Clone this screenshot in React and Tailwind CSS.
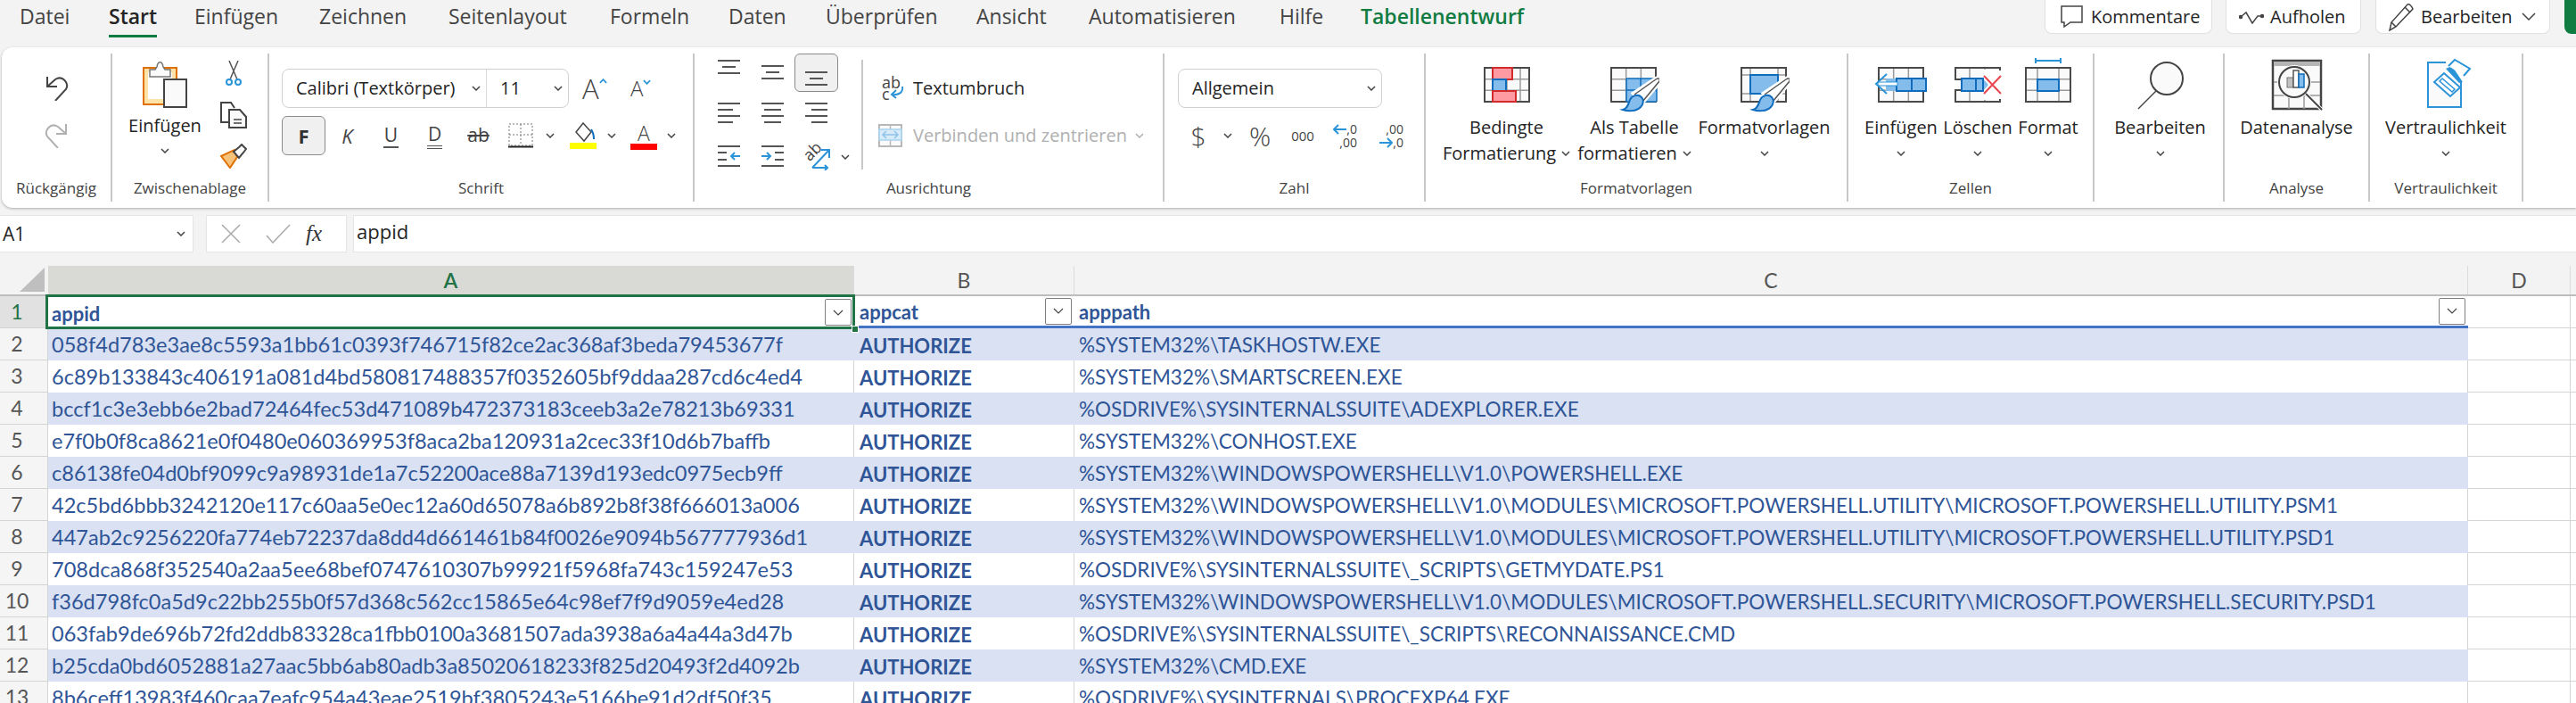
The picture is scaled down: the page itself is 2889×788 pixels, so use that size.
import React from 'react'

const rows = [
  ['058f4d783e3ae8c5593a1bb61c0393f746715f82ce2ac368af3beda79453677f', '%SYSTEM32%\\TASKHOSTW.EXE'],
  ['6c89b133843c406191a081d4bd580817488357f0352605bf9ddaa287cd6c4ed4', '%SYSTEM32%\\SMARTSCREEN.EXE'],
  ['bccf1c3e3ebb6e2bad72464fec53d471089b472373183ceeb3a2e78213b69331', '%OSDRIVE%\\SYSINTERNALSSUITE\\ADEXPLORER.EXE'],
  ['e7f0b0f8ca8621e0f0480e060369953f8aca2ba120931a2cec33f10d6b7baffb', '%SYSTEM32%\\CONHOST.EXE'],
  ['c86138fe04d0bf9099c9a98931de1a7c52200ace88a7139d193edc0975ecb9ff', '%SYSTEM32%\\WINDOWSPOWERSHELL\\V1.0\\POWERSHELL.EXE'],
  ['42c5bd6bbb3242120e117c60aa5e0ec12a60d65078a6b892b8f38f666013a006', '%SYSTEM32%\\WINDOWSPOWERSHELL\\V1.0\\MODULES\\MICROSOFT.POWERSHELL.UTILITY\\MICROSOFT.POWERSHELL.UTILITY.PSM1'],
  ['447ab2c9256220fa774eb72237da8dd4d661461b84f0026e9094b567777936d1', '%SYSTEM32%\\WINDOWSPOWERSHELL\\V1.0\\MODULES\\MICROSOFT.POWERSHELL.UTILITY\\MICROSOFT.POWERSHELL.UTILITY.PSD1'],
  ['708dca868f352540a2aa5ee68bef0747610307b99921f5968fa743c159247e53', '%OSDRIVE%\\SYSINTERNALSSUITE\\_SCRIPTS\\GETMYDATE.PS1'],
  ['f36d798fc0a5d9c22bb255b0f57d368c562cc15865e64c98ef7f9d9059e4ed28', '%SYSTEM32%\\WINDOWSPOWERSHELL\\V1.0\\MODULES\\MICROSOFT.POWERSHELL.SECURITY\\MICROSOFT.POWERSHELL.SECURITY.PSD1'],
  ['063fab9de696b72fd2ddb83328ca1fbb0100a3681507ada3938a6a4a44a3d47b', '%OSDRIVE%\\SYSINTERNALSSUITE\\_SCRIPTS\\RECONNAISSANCE.CMD'],
  ['b25cda0bd6052881a27aac5bb6ab80adb3a85020618233f825d20493f2d4092b', '%SYSTEM32%\\CMD.EXE'],
  ['8b6ceff13983f460caa7eafc954a43eae2519bf3805243e5166be91d2df50f35', '%OSDRIVE%\\SYSINTERNALS\\PROCEXP64.EXE'],
]

const tabs = [
  ['Datei', 'w-[100px]'],
  ['Start', 'w-[96px]'],
  ['Einfügen', 'w-[140px]'],
  ['Zeichnen', 'w-[145px]'],
  ['Seitenlayout', 'w-[181px]'],
  ['Formeln', 'w-[133px]'],
  ['Daten', 'w-[109px]'],
  ['Überprüfen', 'w-[169px]'],
  ['Ansicht', 'w-[126px]'],
  ['Automatisieren', 'w-[214px]'],
  ['Hilfe', 'w-[91px]'],
  ['Tabellenentwurf', 'w-[190px]'],
]

function Chevron({ className = '' }) {
  return (
    <svg className={`w-[10px] h-[6px] shrink-0 ${className}`} viewBox="0 0 10 6" fill="none" stroke="#444" strokeWidth="1.5">
      <path d="M1 1l4 4 4-4" />
    </svg>
  )
}

// table drawing shared by the big ribbon icons, cols and rows are inner line positions
function GridBase({ x = 1, y = 16, w = 50, h = 38, cols, lines }) {
  const xs = cols || [x + w / 3, x + (2 * w) / 3]
  const ys = lines || [y + h / 3, y + (2 * h) / 3]
  return (
    <g>
      <rect x={x} y={y} width={w} height={h} fill="#fafafa" />
      {xs.map((c) => (
        <path key={c} d={`M${c} ${y}v${h}`} stroke="#999" strokeWidth="1.5" />
      ))}
      {ys.map((r) => (
        <path key={r} d={`M${x} ${r}h${w}`} stroke="#999" strokeWidth="1.5" />
      ))}
      <rect x={x} y={y} width={w} height={h} stroke="#4a4a4a" strokeWidth="2" />
    </g>
  )
}

function Brush() {
  return (
    <g>
      <path d="M26 45L50 29c3-2 5-1 4 2L34 55z" fill="#fff" stroke="#fff" strokeWidth="6" />
      <path d="M26 46L50 29c3-2 5-1 4 2L35 54" fill="#fff" stroke="#555" strokeWidth="1.5" />
      <path d="M13 63c5-1 6-6 8-11 2-5 9-7 13-3 3 3 2 8-1 11-5 5-14 5-20 3z" fill="#84bdec" stroke="#0f6cbd" strokeWidth="2" />
    </g>
  )
}

function CondIcon() {
  return (
    <svg className="w-[52px] h-[68px]" viewBox="0 0 52 68" fill="none">
      <GridBase cols={[10, 26, 41]} />
      <rect x="10" y="16" width="22" height="13" fill="#ff9aa2" stroke="#d22b2b" strokeWidth="2" />
      <rect x="10" y="29" width="15" height="13" fill="#84bdec" stroke="#0f6cbd" strokeWidth="2" />
      <rect x="10" y="42" width="26" height="12" fill="#ff9aa2" stroke="#d22b2b" strokeWidth="2" />
    </svg>
  )
}

function TableIcon() {
  return (
    <svg className="w-[56px] h-[68px]" viewBox="-2 0 56 68" fill="none">
      <GridBase x={0} />
      <rect x="17" y="28" width="34" height="26" fill="#84bdec" />
      <path d="M17 28v26h34M17 28h34v26M33 28v26M17 41h34" stroke="#0f6cbd" strokeWidth="1.5" />
      <Brush />
    </svg>
  )
}

function StyleIcon() {
  return (
    <svg className="w-[56px] h-[68px]" viewBox="-2 0 56 68" fill="none">
      <GridBase x={0} cols={[10, 41]} lines={[24, 45]} />
      <rect x="10" y="24" width="31" height="21" fill="#84bdec" stroke="#0f6cbd" strokeWidth="2" />
      <Brush />
    </svg>
  )
}

function InsertIcon() {
  return (
    <svg className="w-[60px] h-[68px]" viewBox="0 0 60 68" fill="none">
      <GridBase x={5} />
      <rect x="13" y="28" width="13" height="14" fill="#84bdec" />
      <rect x="25" y="28" width="33" height="14" fill="#84bdec" stroke="#0f6cbd" strokeWidth="2" />
      <path d="M42 28v14" stroke="#0f6cbd" strokeWidth="2" />
      <path d="M4 32h22v4H4z" fill="#fff" stroke="#2b94d8" strokeWidth="1" />
      <path d="M14 23L2 34l12 11" stroke="#2b94d8" strokeWidth="2" />
    </svg>
  )
}

function DeleteIcon() {
  return (
    <svg className="w-[56px] h-[68px]" viewBox="0 0 56 68" fill="none">
      <GridBase x={3} cols={[19, 36]} />
      <rect x="1" y="30" width="7" height="10" fill="#fff" />
      <path d="M3 29v1M3 41v-1M3 41h7M3 29h7" stroke="#4a4a4a" strokeWidth="2" />
      <rect x="35" y="18" width="20" height="34" fill="#fff" />
      <path d="M39 55v-1M53 16v3M53 51v3" stroke="#4a4a4a" strokeWidth="2" />
      <path d="M10 28h24l6 7-6 7H10z" fill="#84bdec" />
      <path d="M26 28H10v14h24V28h-8v14" stroke="#0f6cbd" strokeWidth="2" />
      <path d="M35 25l19 20M54 25L35 45" stroke="#e8474f" strokeWidth="2" />
    </svg>
  )
}

function FormatIcon() {
  return (
    <svg className="w-[52px] h-[68px]" viewBox="0 0 52 68" fill="none">
      <path d="M12 8h28M12 5v6M40 5v6" stroke="#2b94d8" strokeWidth="2" />
      <GridBase cols={[14, 38]} />
      <rect x="14" y="29" width="24" height="13" fill="#84bdec" stroke="#0f6cbd" strokeWidth="2" />
    </svg>
  )
}

function SearchIcon() {
  return (
    <svg className="w-[54px] h-[68px]" viewBox="0 0 54 68" fill="none" stroke="#444">
      <circle cx="34" cy="28" r="18" fill="#fafafa" strokeWidth="2" />
      <path d="M22 42L2 62" strokeWidth="1.5" />
    </svg>
  )
}

function AnalysisIcon() {
  return (
    <svg className="w-[58px] h-[68px]" viewBox="0 0 58 68" fill="none">
      <rect x="2" y="8" width="54" height="54" fill="#fafafa" stroke="#444" strokeWidth="2.5" />
      <rect x="3" y="9" width="52" height="5" fill="#b5b5b5" />
      <path d="M3 32h52M3 47h52M20 47v15M37 47v15" stroke="#999" strokeWidth="1.5" />
      <circle cx="26" cy="32" r="19" fill="#fafafa" />
      <path d="M39 45l18 18" stroke="#fff" strokeWidth="4" />
      <path d="M39 45l18 18" stroke="#444" strokeWidth="2" />
      <circle cx="26" cy="32" r="17" stroke="#444" strokeWidth="2" />
      <rect x="18" y="27" width="7" height="11" fill="#c0c0c0" stroke="#777" />
      <rect x="25" y="19" width="6" height="19" fill="#fff" stroke="#555" strokeWidth="1.5" />
      <rect x="31" y="23" width="6" height="15" fill="#84bdec" stroke="#0f6cbd" strokeWidth="1.5" />
    </svg>
  )
}

function SensitivityIcon() {
  return (
    <svg className="w-[60px] h-[68px]" viewBox="0 0 60 68" fill="none">
      <path d="M30 10H10v50h37V31" fill="#fafafa" stroke="#2b94d8" strokeWidth="2" />
      <path d="M17 32l11-10 18 16-11 10z" fill="#fff" stroke="#2b94d8" strokeWidth="2" />
      <path d="M23 31l3-3 14 12-3 3z" stroke="#2b94d8" strokeWidth="1.5" />
      <path d="M30 17l7-3 12 18-4 1z" fill="#2b94d8" />
      <path d="M33 14l7-7 17 10-7 8" fill="#fff" stroke="#2b94d8" strokeWidth="2" />
    </svg>
  )
}

function AlignLines({ lines }) {
  // each line: [x, y, len]
  return (
    <svg className="w-[26px] h-[24px]" viewBox="0 0 26 24" fill="none" stroke="#555" strokeWidth="2">
      {lines.map(([x, y, len], i) => (
        <path key={i} d={`M${x} ${y}h${len}`} />
      ))}
    </svg>
  )
}

function Group({ width, label, body, children }) {
  return (
    <div className={`${width} h-[166px] flex flex-col border-r-2 border-[#c8c8c8] shrink-0`}>
      <div className={`h-[136px] ${body}`}>{children}</div>
      <div className="h-[30px] text-center text-[17px] leading-[30px] text-[#444]">{label}</div>
    </div>
  )
}

function BigButton({ width, icon, lines, chevron }) {
  return (
    <div className={`${width} flex flex-col items-center shrink-0`}>
      {icon}
      {lines.map((line, i) => (
        <div key={i} className="h-[29px] leading-[29px] whitespace-nowrap text-[20px] flex items-center gap-[6px]">
          {line}
          {chevron === 'inline' && i === 1 && <Chevron />}
        </div>
      ))}
      {chevron === 'below' && (
        <div className="h-[29px] flex items-center">
          <Chevron />
        </div>
      )}
    </div>
  )
}

const alignTop = [[0, 1, 25], [5, 8, 15], [0, 15, 25]]

function Ribbon() {
  return (
    <div className="h-[180px] ml-[2px] py-[7px] bg-white rounded-l-xl shadow-[0_1px_3px_rgba(0,0,0,0.3)] flex text-[#242424]">
      <Group width="w-[124px]" label="Rückgängig" body="flex flex-col items-center pt-[25px] gap-[25px]">
        <svg className="w-[27px] h-[28px]" viewBox="0 0 27 28" fill="none" stroke="#444" strokeWidth="2">
          <path d="M3 1v11h11M3 12l9-8c8-5 16 4 12 11L12 28" />
        </svg>
        <svg className="w-[27px] h-[28px]" viewBox="0 0 27 28" fill="none" stroke="#b0b0b0" strokeWidth="2">
          <path d="M24 1v11H13M24 12l-9-8C7-1-1 8 3 15l12 13" />
        </svg>
      </Group>

      <Group width="w-[176px]" label="Zwischenablage" body="flex pl-[18px]">
        <div className="w-[82px] flex flex-col items-center pt-[7px]">
          <svg className="w-[50px] h-[54px]" viewBox="0 0 50 54" fill="none">
            <rect x="1" y="9" width="37" height="41" fill="#fde3a7" stroke="#e07000" strokeWidth="2" />
            <rect x="6" y="14" width="27" height="30" fill="#fff" />
            <path d="M8 11h6l2-3c1-7 6-7 7 0l2 3h6v8H8z" fill="#fafafa" stroke="#777" strokeWidth="1.5" />
            <rect x="24" y="22" width="25" height="31" fill="#fafafa" stroke="#444" strokeWidth="2" />
          </svg>
          <div className="mt-[5px] h-[29px] leading-[29px] text-[20px]">Einfügen</div>
          <Chevron className="mt-[11px]" />
        </div>
        <div className="w-[30px] ml-[21px] flex flex-col items-center pt-[8px]">
          <svg className="w-[20px] h-[28px]" viewBox="0 0 20 28" fill="none">
            <path d="M5 0l9 21M15 0L6 21" stroke="#555" strokeWidth="1.5" />
            <circle cx="5" cy="24" r="3" stroke="#2b94d8" strokeWidth="2" />
            <circle cx="15" cy="24" r="3" stroke="#2b94d8" strokeWidth="2" />
          </svg>
          <svg className="w-[30px] h-[30px] mt-[18px]" viewBox="0 0 30 30" fill="none" stroke="#444" strokeWidth="2">
            <path d="M9 23H1V1h11l4 6" />
            <path d="M10 9h12l7 8v12H10z" fill="#fafafa" />
            <path d="M15 20h9M15 24h9" strokeWidth="1.5" />
          </svg>
          <svg className="w-[30px] h-[28px] mt-[17px]" viewBox="0 0 30 28" fill="none">
            <path d="M1 14l15-7 3 8-8 12z" fill="#f6c27a" stroke="#e07000" strokeWidth="2" />
            <path d="M15 9l6-5 3-3 5 5-3 4-5 6z" fill="#fafafa" stroke="#444" strokeWidth="2" />
          </svg>
        </div>
      </Group>

      <Group width="w-[477px]" label="Schrift" body="pl-[14px] pt-[17px]">
        <div className="flex items-center h-[44px]">
          <div className="w-[322px] h-[44px] flex items-center border border-[#d0d0d0] rounded-lg">
            <div className="w-[229px] pl-[15px] pr-[6px] flex items-center justify-between border-r border-[#d8d8d8] h-full text-[20px] whitespace-nowrap">
              <span>Calibri (Textkörper)</span>
              <Chevron />
            </div>
            <div className="flex-1 pl-[15px] pr-[6px] flex items-center justify-between text-[20px]">
              <span>11</span>
              <Chevron />
            </div>
          </div>
          <div className="ml-[15px] w-[30px] flex items-start text-[#444]">
            <span className="text-[31px] font-light leading-[44px]">A</span>
            <svg className="w-[9px] h-[6px] mt-[11px] shrink-0" viewBox="0 0 10 6" fill="none" stroke="#2b94d8" strokeWidth="2">
              <path d="M1 5l4-4 4 4" />
            </svg>
          </div>
          <div className="ml-[24px] w-[26px] flex items-start text-[#444]">
            <span className="text-[24px] font-light leading-[44px]">A</span>
            <svg className="w-[9px] h-[6px] mt-[12px] shrink-0" viewBox="0 0 10 6" fill="none" stroke="#2b94d8" strokeWidth="2">
              <path d="M1 1l4 4 4-4" />
            </svg>
          </div>
        </div>
        <div className="flex items-center h-[44px] mt-[9px] text-[#444]">
          <div className="w-[49px] h-[44px] flex items-center justify-center rounded-md border border-[#8a8a8a] bg-[#f0f0f0] text-[22px] font-bold text-[#333]">F</div>
          <div className="w-[49px] ml-0 text-center text-[22px] italic">K</div>
          <div className="w-[49px] flex justify-center"><span className="text-[21px] leading-[25px] border-b-2 border-[#555] px-[1px]">U</span></div>
          <div className="w-[49px] flex justify-center"><span className="text-[21px] leading-[25px] border-b-4 border-double border-[#555] px-[1px]">D</span></div>
          <div className="w-[49px] text-center text-[21px] line-through">ab</div>
          <svg className="w-[28px] h-[28px] ml-[9px]" viewBox="0 0 28 28" fill="none" stroke="#777" strokeWidth="1" strokeDasharray="2 2">
            <path d="M1 1h26v24H1zM14 1v24M1 13h26" />
            <path d="M0 26.5h28" stroke="#222" strokeWidth="2" strokeDasharray="none" />
          </svg>
          <Chevron className="ml-[14px]" />
          <svg className="w-[30px] h-[30px] ml-[17px]" viewBox="0 0 30 30" fill="none">
            <path d="M15 1l9 10-8 10-9-10z" stroke="#444" strokeWidth="1.5" />
            <path d="M24 8c2 3 3 5 3 11" stroke="#0f6cbd" strokeWidth="2" />
            <rect x="0" y="23" width="30" height="7" fill="#ffff00" />
          </svg>
          <Chevron className="ml-[12px]" />
          <div className="ml-[16px] w-[30px] flex flex-col items-center">
            <span className="text-[23px] font-light leading-[24px] h-[24px]">A</span>
            <div className="w-[30px] h-[7px] bg-[#ff0000]" />
          </div>
          <Chevron className="ml-[11px]" />
        </div>
      </Group>

      <Group width="w-[527px]" label="Ausrichtung" body="flex pl-[15px]">
        <div className="w-[146px] grid grid-cols-3 grid-rows-[43px_48px_48px]">
          <div className="flex items-start justify-center pt-[7px]"><AlignLines lines={alignTop} /></div>
          <div className="flex items-start justify-center pt-[13px]"><AlignLines lines={alignTop} /></div>
          <div className="flex items-start justify-center pt-[19px] rounded-md border border-[#8a8a8a] bg-[#f0f0f0]"><AlignLines lines={alignTop} /></div>
          <div className="flex items-center justify-center"><AlignLines lines={[[0, 1, 25], [0, 8, 17], [0, 15, 25], [0, 22, 17]]} /></div>
          <div className="flex items-center justify-center"><AlignLines lines={[[0, 1, 25], [3, 8, 19], [0, 15, 25], [3, 22, 19]]} /></div>
          <div className="flex items-center justify-center"><AlignLines lines={[[0, 1, 25], [7, 8, 18], [0, 15, 25], [7, 22, 18]]} /></div>
          <div className="flex items-center justify-center">
            <svg className="w-[26px] h-[26px]" viewBox="0 0 26 26" fill="none" stroke="#555" strokeWidth="2">
              <path d="M0 2h25M0 9h10M0 17h10M0 24h25" />
              <path d="M25 13H15M19 9l-4 4 4 4" stroke="#2b94d8" />
            </svg>
          </div>
          <div className="flex items-center justify-center">
            <svg className="w-[26px] h-[26px]" viewBox="0 0 26 26" fill="none" stroke="#555" strokeWidth="2">
              <path d="M0 2h25M15 9h10M15 17h10M0 24h25" />
              <path d="M0 13h10M6 9l4 4-4 4" stroke="#2b94d8" />
            </svg>
          </div>
          <div className="flex items-center justify-center">
            <div className="relative w-[32px] h-[32px]">
              <span className="absolute left-[0px] top-[-1px] -rotate-45 text-[18px] leading-[22px] text-[#444]">ab</span>
              <svg className="absolute left-0 top-0 w-[32px] h-[32px]" viewBox="0 0 32 32" fill="none" stroke="#2b94d8" strokeWidth="2">
                <path d="M11 29L30 9M21 9h9v9M11 29h17M25 26l3 3-3 3" />
              </svg>
            </div>
          </div>
        </div>
        <Chevron className="mt-[113px] ml-[3px]" />
        <div className="w-[2px] h-[123px] mt-[7px] ml-[13px] bg-[#c8c8c8]" />
        <div className="ml-[16px] pt-[17px]">
          <div className="flex items-center h-[44px] text-[20px]">
            <div className="relative w-[26px] h-[26px] ml-[5px] text-[18px] leading-[13px] text-[#444]">
              ab<br />c
              <svg className="absolute left-0 top-0 w-[26px] h-[26px]" viewBox="0 0 26 26" fill="none" stroke="#2b94d8" strokeWidth="2">
                <path d="M23 11c1 6-3 10-12 9M16 15l-5 5 5 4" />
              </svg>
            </div>
            <span className="ml-[9px]">Textumbruch</span>
          </div>
          <div className="flex items-center h-[44px] mt-[9px] text-[20px] text-[#b0b0b0] whitespace-nowrap">
            <svg className="w-[27px] h-[26px] ml-[1px]" viewBox="0 0 27 26" fill="none">
              <rect x="1" y="1" width="25" height="24" fill="#fafafa" stroke="#b8b8b8" strokeWidth="2" />
              <path d="M13.5 1v24" stroke="#b8b8b8" strokeWidth="1.5" />
              <rect x="1" y="6" width="25" height="12" fill="#d7ebf9" stroke="#a9d4f0" strokeWidth="1.5" />
              <path d="M5 12h17M9 8l-4 4 4 4M18 8l4 4-4 4" stroke="#8fc4ea" strokeWidth="1.5" />
            </svg>
            <span className="ml-[12px]">Verbinden und zentrieren</span>
            <svg className="w-[10px] h-[6px] ml-[9px]" viewBox="0 0 10 6" fill="none" stroke="#b0b0b0" strokeWidth="1.5">
              <path d="M1 1l4 4 4-4" />
            </svg>
          </div>
        </div>
      </Group>

      <Group width="w-[293px]" label="Zahl" body="pl-[15px] pt-[17px]">
        <div className="w-[229px] h-[44px] pl-[15px] pr-[6px] flex items-center justify-between border border-[#d0d0d0] rounded-lg text-[20px]">
          <span>Allgemein</span>
          <Chevron />
        </div>
        <div className="flex items-center h-[44px] mt-[9px] text-[#444]">
          <span className="w-[46px] text-center text-[30px] font-light">$</span>
          <Chevron className="ml-[5px]" />
          <span className="w-[40px] ml-[11px] text-center text-[30px] font-light">%</span>
          <span className="w-[46px] ml-[5px] text-center text-[15px]">000</span>
          <div className="w-[30px] ml-[8px] flex flex-col text-[14px] leading-[15px]">
            <div className="flex items-center justify-end">
              <svg className="w-[15px] h-[12px]" viewBox="0 0 15 12" fill="none" stroke="#2b94d8" strokeWidth="2">
                <path d="M15 6H1M6 1L1 6l5 5" />
              </svg>
              <span>,0</span>
            </div>
            <div className="text-right">,00</div>
          </div>
          <div className="w-[30px] ml-[22px] flex flex-col text-[14px] leading-[15px]">
            <div className="text-right">,00</div>
            <div className="flex items-center justify-end">
              <svg className="w-[15px] h-[12px]" viewBox="0 0 15 12" fill="none" stroke="#2b94d8" strokeWidth="2">
                <path d="M0 6h14M9 1l5 5-5 5" />
              </svg>
              <span>,0</span>
            </div>
          </div>
        </div>
      </Group>

      <Group width="w-[474px]" label="Formatvorlagen" body="flex pl-[11px]">
        <BigButton width="w-[159px]" icon={<CondIcon />} lines={['Bedingte', 'Formatierung']} chevron="inline" />
        <BigButton width="w-[128px]" icon={<TableIcon />} lines={['Als Tabelle', 'formatieren']} chevron="inline" />
        <BigButton width="w-[149px] ml-[7px]" icon={<StyleIcon />} lines={['Formatvorlagen']} chevron="below" />
      </Group>

      <Group width="w-[276px]" label="Zellen" body="flex pl-[18px]">
        <BigButton width="w-[82px]" icon={<InsertIcon />} lines={['Einfügen']} chevron="below" />
        <BigButton width="w-[76px] ml-[7px]" icon={<DeleteIcon />} lines={['Löschen']} chevron="below" />
        <BigButton width="w-[66px] ml-[8px]" icon={<FormatIcon />} lines={['Format']} chevron="below" />
      </Group>

      <Group width="w-[146px]" label="" body="flex justify-center pl-[3px]">
        <BigButton width="w-[110px]" icon={<SearchIcon />} lines={['Bearbeiten']} chevron="below" />
      </Group>

      <Group width="w-[163px]" label="Analyse" body="flex justify-center">
        <BigButton width="w-[130px]" icon={<AnalysisIcon />} lines={['Datenanalyse']} />
      </Group>

      <Group width="w-[172px]" label="Vertraulichkeit" body="flex justify-center">
        <BigButton width="w-[140px]" icon={<SensitivityIcon />} lines={['Vertraulichkeit']} chevron="below" />
      </Group>
    </div>
  )
}

function TabBar() {
  return (
    <div className="h-[53px] flex pl-[22px] text-[#444]">
      <div className="flex">
        {tabs.map(([label, width]) => (
          <div key={label} className={`${width} shrink-0 h-[42px] text-[23px] leading-[36px] whitespace-nowrap`}>
            {label === 'Start' ? (
              <span className="inline-block h-[42px] border-b-[3px] border-[#107c41] font-semibold text-[#242424]">{label}</span>
            ) : label === 'Tabellenentwurf' ? (
              <span className="font-semibold text-[#107c41]">{label}</span>
            ) : (
              label
            )}
          </div>
        ))}
      </div>
      <div className="ml-[577px] flex items-start text-[#242424] text-[20px]">
        <div className="w-[188px] h-[38px] flex items-center pl-[17px] gap-[9px] bg-white border border-t-0 border-[#e0e0e0] rounded-b-lg">
          <svg className="w-[25px] h-[25px]" viewBox="0 0 25 25" fill="none" stroke="#444" strokeWidth="1.5">
            <path d="M1 1h23v18H11l-7 5v-5H1z" />
          </svg>
          Kommentare
        </div>
        <div className="w-[152px] h-[38px] ml-[15px] flex items-center pl-[14px] gap-[7px] bg-white border border-t-0 border-[#e0e0e0] rounded-b-lg">
          <svg className="w-[28px] h-[16px]" viewBox="0 0 28 16" fill="none" stroke="#444" strokeWidth="1.5">
            <path d="M2 8l6-5 7 12 6-8h5" />
            <circle cx="2" cy="8" r="1.5" fill="#444" />
            <circle cx="26" cy="7" r="1.5" fill="#444" />
          </svg>
          Aufholen
        </div>
        <div className="w-[196px] h-[38px] ml-[16px] flex items-center pl-[14px] gap-[8px] bg-white border border-t-0 border-[#e0e0e0] rounded-b-lg">
          <svg className="w-[28px] h-[32px]" viewBox="0 0 28 32" fill="none" stroke="#444" strokeWidth="1.5">
            <path d="M1 31l2-9L21 2c2-1 5 2 6 5L8 27z" />
            <path d="M3 22l5 5M18 5l6 6" />
          </svg>
          Bearbeiten
          <svg className="w-[16px] h-[9px] ml-[2px]" viewBox="0 0 16 9" fill="none" stroke="#444" strokeWidth="1.5">
            <path d="M1 1l7 7 7-7" />
          </svg>
        </div>
        <div className="w-[13px] h-[38px] ml-[16px] bg-[#107c41] rounded-bl-lg" />
      </div>
    </div>
  )
}

function FormulaBar() {
  return (
    <div className="h-[42px] mt-[8px] flex text-[#242424]">
      <div className="w-[217px] flex items-center justify-between pl-[3px] pr-[8px] bg-white border border-l-0 border-[#e5e5e5] text-[21px]">
        <span className="pt-[2px]">A1</span>
        <Chevron />
      </div>
      <div className="w-[158px] ml-[14px] flex items-center bg-white border border-[#e5e5e5]">
        <svg className="w-[22px] h-[22px] ml-[16px]" viewBox="0 0 22 22" fill="none" stroke="#aaa" strokeWidth="1.5">
          <path d="M1 1l20 20M21 1L1 21" />
        </svg>
        <svg className="w-[28px] h-[22px] ml-[28px]" viewBox="0 0 28 22" fill="none" stroke="#aaa" strokeWidth="1.5">
          <path d="M1 13l7 8L27 1" />
        </svg>
        <span className="ml-[17px] font-['Liberation_Serif',serif] italic text-[25px] text-[#333]">fx</span>
      </div>
      <div className="flex-1 ml-[7px] pl-[3px] bg-white border border-r-0 border-[#e5e5e5] text-[22px] leading-[34px]">appid</div>
    </div>
  )
}

function FilterButton() {
  return (
    <div className="w-[30px] h-[30px] flex items-center justify-center bg-white border border-[#808080] rounded-[2px]">
      <svg className="w-[12px] h-[7px]" viewBox="0 0 12 7" fill="none" stroke="#444" strokeWidth="1.2">
        <path d="M1 1l5 5 5-5" />
      </svg>
    </div>
  )
}

function ColumnHeaders() {
  const head = 'h-full flex items-center justify-center text-[23px] text-[#555] border-r border-[#dcdcdc] font-["Lato",sans-serif]'
  return (
    <div className="h-[34px] mt-[15px] flex bg-[#f3f3f3] border-b-2 border-[#bdbdbd]">
      <div className="w-[54px] h-full pl-[22px] pt-[2px] pb-[4px]">
        <svg className="w-[28px] h-[27px]" viewBox="0 0 28 27">
          <path d="M28 0v27H0z" fill="#bfbfbf" />
        </svg>
      </div>
      <div className={`${head} w-[904px] bg-[#d9d9d6] !text-[#217346] font-semibold`}>A</div>
      <div className={`${head} w-[247px]`}>B</div>
      <div className={`${head} w-[1563px]`}>C</div>
      <div className={`${head} w-[115px]`}>D</div>
    </div>
  )
}

function RowHead({ n, active }) {
  return (
    <div className={`w-[54px] h-full pr-[15px] shrink-0 flex items-center justify-center text-[23px] border-b border-r border-[#d4d4d4] ${active ? 'bg-[#e1e1e1] text-[#217346]' : 'bg-[#f5f5f5] text-[#555]'}`}>
      {n}
    </div>
  )
}

function EmptyCols() {
  return (
    <>
      <div className="w-[115px] h-full shrink-0 bg-white border-b border-r border-[#d4d4d4]" />
      <div className="flex-1 h-full bg-white border-b border-[#d4d4d4]" />
    </>
  )
}

function HeaderRow() {
  const cell = 'h-full flex items-center justify-between shrink-0 bg-white font-bold text-[22px] text-[#2f5597]'
  return (
    <div className="h-[36px] flex">
      <RowHead n={1} active />
      <div className={`${cell} w-[904px] pl-[4px] pr-[3px] relative`}>
        <span className="mt-[2px]">appid</span>
        <FilterButton />
        {/* selection frame lies over the cell */}
        <div className="absolute left-[-3px] right-[-1px] top-[-2px] bottom-[-1px] border-[3px] border-[#217346]" />
        <div className="absolute right-[-5px] bottom-[-5px] w-[8px] h-[8px] bg-[#217346] border border-white" />
      </div>
      <div className={`${cell} w-[247px] pl-[6px] pr-[3px] border-b-[3px] border-[#4472c4]`}>
        <span className="mt-[2px]">appcat</span>
        <FilterButton />
      </div>
      <div className={`${cell} w-[1563px] pl-[5px] pr-[3px] border-b-[3px] border-[#4472c4]`}>
        <span className="mt-[2px]">apppath</span>
        <FilterButton />
      </div>
      <EmptyCols />
    </div>
  )
}

function DataRow({ n, appid, path }) {
  const striped = n % 2 === 0
  const line = striped ? 'bg-[#d9e1f2]' : 'bg-white border-r border-[#d4d4d4]'
  return (
    <div className="h-[36px] flex">
      <RowHead n={n} />
      <div className={`w-[904px] h-full shrink-0 pl-[4px] pt-[2px] flex items-center text-[23.55px] text-[#2f5597] whitespace-nowrap ${line}`}>{appid}</div>
      <div className={`w-[247px] h-full shrink-0 pl-[6px] pt-[2px] flex items-center text-[22px] font-bold text-[#2f5597] ${line}`}>AUTHORIZE</div>
      <div className={`w-[1563px] h-full shrink-0 pl-[5px] pt-[2px] flex items-center text-[22.5px] text-[#2f5597] whitespace-nowrap ${line}`}>{path}</div>
      <EmptyCols />
    </div>
  )
}

export default function App() {
  return (
    <div className="w-[2889px] h-[788px] overflow-hidden bg-[#f3f3f3] font-['Open_Sans',sans-serif]">
      <TabBar />
      <Ribbon />
      <FormulaBar />
      <ColumnHeaders />
      <div className="font-['Lato',sans-serif]">
        <HeaderRow />
        {rows.map(([appid, path], i) => (
          <DataRow key={appid} n={i + 2} appid={appid} path={path} />
        ))}
      </div>
    </div>
  )
}
